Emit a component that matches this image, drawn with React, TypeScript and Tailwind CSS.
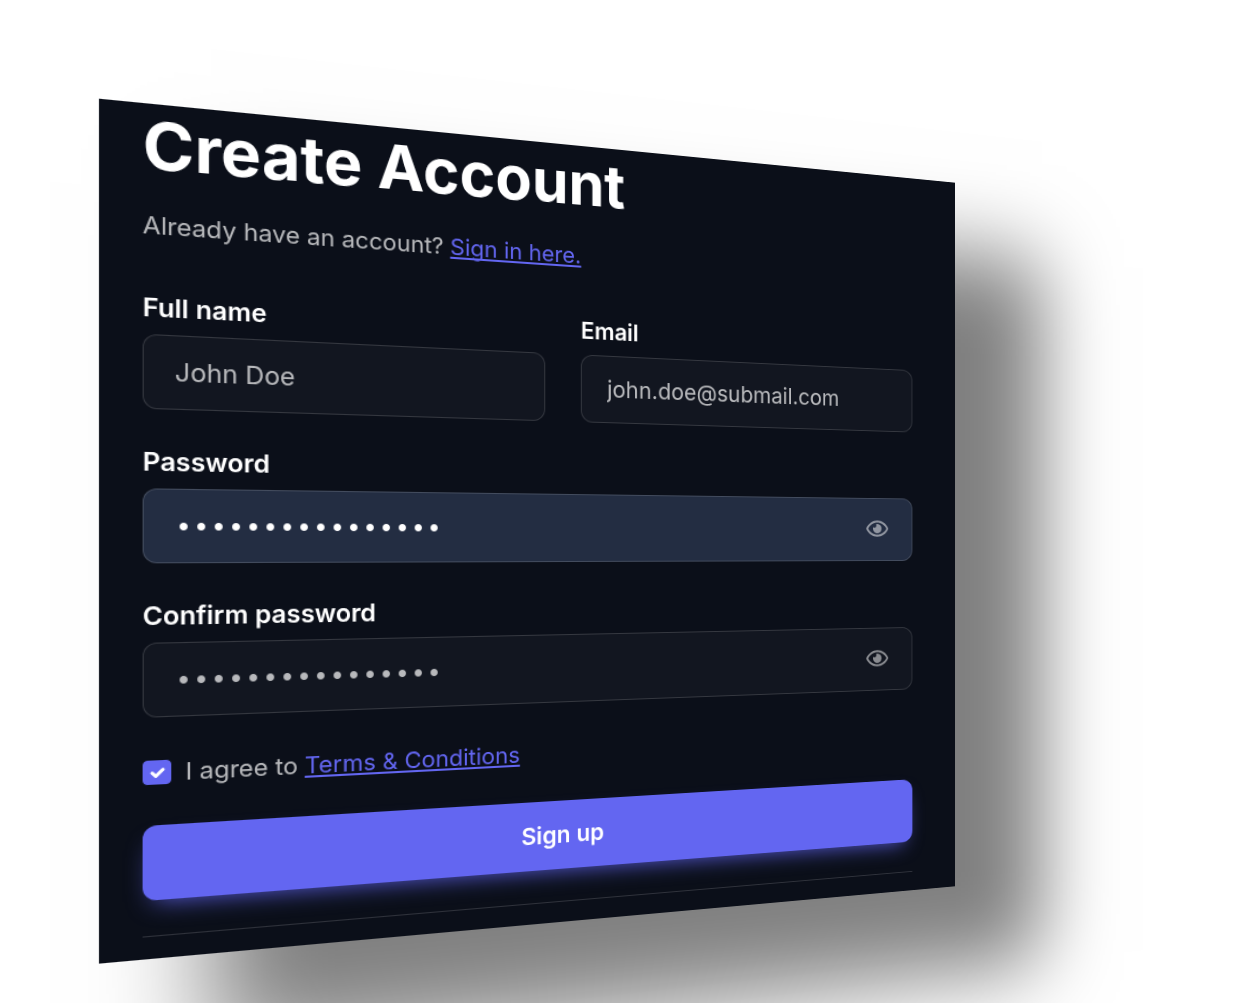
import { useState } from "react";
import type { InputHTMLAttributes } from "react";
import { FaRegEye } from "react-icons/fa";

const labelCls = "block text-[23px] leading-8 font-semibold text-white";

const fieldCls =
  "h-[68px] w-full rounded-xl border border-white/15 px-[26px] outline-none focus:border-[#6366f1]";

const linkCls =
  "text-[#6366f1] underline decoration-2 underline-offset-2 [text-decoration-skip-ink:none] hover:no-underline";

function TextField({
  id,
  label,
  ...rest
}: { id: string; label: string } & InputHTMLAttributes<HTMLInputElement>) {
  return (
    <div>
      <label htmlFor={id} className={labelCls}>
        {label}
      </label>
      <input
        id={id}
        className={
          fieldCls + " mt-2 bg-white/3 text-[23px] text-white/70 placeholder:text-white/70"
        }
        {...rest}
      />
    </div>
  );
}

function PasswordField({
  id,
  label,
  filled = false,
}: {
  id: string;
  label: string;
  filled?: boolean;
}) {
  const [value, setValue] = useState("correct-horse-16");
  const [visible, setVisible] = useState(false);

  return (
    <div>
      <label htmlFor={id} className={labelCls}>
        {label}
      </label>
      <div className="relative mt-2">
        <input
          id={id}
          type={visible ? "text" : "password"}
          value={value}
          onChange={(e) => setValue(e.target.value)}
          className={
            fieldCls +
            " pt-1 font-['Liberation_Mono',monospace] text-[25px] " +
            (filled ? "bg-[#232d42] text-white" : "bg-white/3 text-white/70")
          }
        />
        <button
          type="button"
          aria-label={visible ? "Hide password" : "Show password"}
          onClick={() => setVisible(!visible)}
          className="absolute inset-y-0 right-[29px] my-auto flex items-center pb-0.5 text-white/50"
        >
          <FaRegEye className="h-6 w-[26px]" />
        </button>
      </div>
    </div>
  );
}

export default function App() {
  const [agreed, setAgreed] = useState(true);

  return (
    <main className="min-h-screen bg-white pt-[145px] pr-[255px] pl-[141px] font-[Inter,sans-serif]">
      {/* the card is turned away from the viewer on its right side */}
      <section className="origin-[50%_404px] transform-[perspective(726px)_rotateY(10deg)] bg-[#0b0f19] pt-2 pr-[52px] pb-5 pl-9 shadow-[102px_86px_90px_8px_rgba(0,0,0,0.5)]">
        <h1 className="text-[59px] leading-[60px] font-bold text-white">Create Account</h1>
        <p className="mt-6 text-[22px] leading-9 text-white/70">
          Already have an account?{" "}
          <a href="#signin" className={linkCls}>
            Sign in here.
          </a>
        </p>

        <form className="mt-[41px] flex flex-col gap-8" onSubmit={(e) => e.preventDefault()}>
          <div className="grid grid-cols-2 gap-9">
            <TextField id="name" label="Full name" type="text" placeholder="John Doe" />
            <TextField id="email" label="Email" type="email" placeholder="john.doe@submail.com" />
          </div>
          <PasswordField id="password" label="Password" filled />
          <PasswordField id="confirm" label="Confirm password" />

          <div className="flex items-center gap-3 pt-0.5">
            <span className="relative flex">
              <input
                id="terms"
                type="checkbox"
                checked={agreed}
                onChange={(e) => setAgreed(e.target.checked)}
                className="h-[22px] w-6 appearance-none rounded border border-white/20 checked:border-[#6366f1] checked:bg-[#6366f1]"
              />
              {agreed && (
                <svg
                  viewBox="0 0 24 22"
                  fill="none"
                  stroke="white"
                  strokeWidth="3"
                  strokeLinecap="round"
                  strokeLinejoin="round"
                  className="pointer-events-none absolute inset-0"
                >
                  <path d="M8 11.5l3 3 6-6" />
                </svg>
              )}
            </span>
            <p className="text-[22px] leading-8 text-white/70">
              <label htmlFor="terms">I agree to</label>{" "}
              <a href="#terms" className={linkCls}>
                Terms &amp; Conditions
              </a>
            </p>
          </div>

          <button
            type="submit"
            className="h-[68px] rounded-xl bg-[#6366f1] text-[23px] font-semibold text-white shadow-[0_10px_22px_-10px_rgba(99,102,241,0.9)]"
          >
            Sign up
          </button>
        </form>

        <hr className="mt-8 border-white/15" />
      </section>
    </main>
  );
}
